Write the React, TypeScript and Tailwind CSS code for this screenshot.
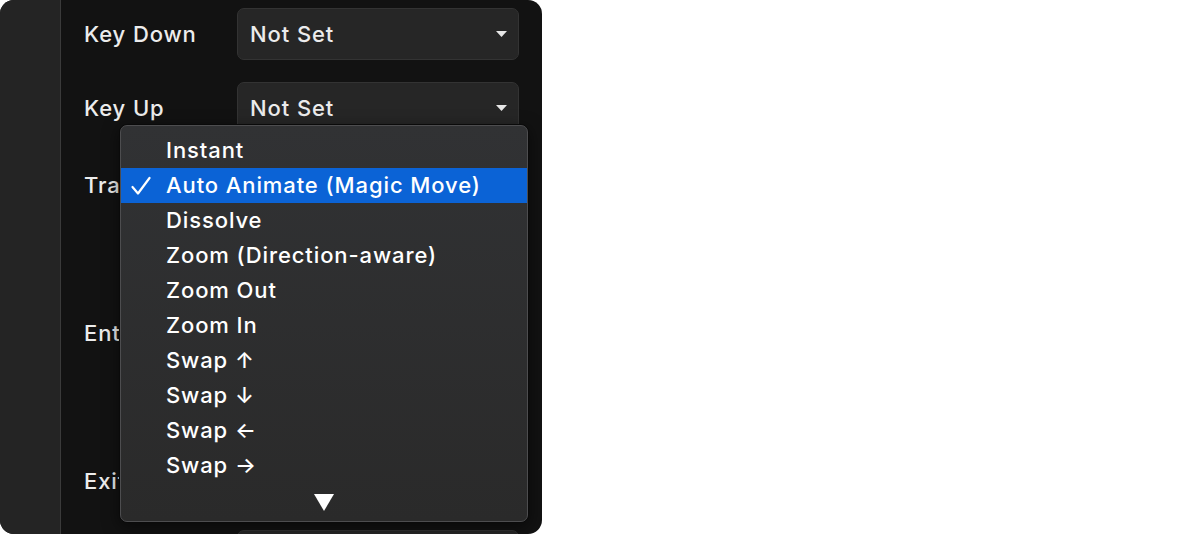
import React from 'react';

const items = [
  'Instant',
  'Auto Animate (Magic Move)',
  'Dissolve',
  'Zoom (Direction-aware)',
  'Zoom Out',
  'Zoom In',
  'Swap ↑',
  'Swap ↓',
  'Swap ←',
  'Swap →',
];

function Caret() {
  return (
    <svg width="11" height="6" viewBox="0 0 11 6" className="shrink-0">
      <path d="M0 0 H11 L5.5 6 Z" fill="#e6e6e6" />
    </svg>
  );
}

function Select({ value, className = '' }: { value: string; className?: string }) {
  return (
    <div
      className={
        'w-[282px] h-[52px] rounded-[7px] bg-[#262626] border border-[#333333] flex items-center justify-between pl-[12px] pr-[11px] ' +
        className
      }
    >
      <span className="text-[22px] font-medium tracking-[0.9px] text-[#ececec]">{value}</span>
      <Caret />
    </div>
  );
}

function Row({ label, children, className = '' }: { label: string; children?: React.ReactNode; className?: string }) {
  return (
    <div className={'flex items-start ' + className}>
      <div className="w-[153px] shrink-0 h-[52px] flex items-center text-[22px] font-medium tracking-[0.9px] text-[#ececec]">
        {label}
      </div>
      {children}
    </div>
  );
}

export default function App() {
  return (
    <div className="w-[1200px] h-[536px] bg-white" style={{ fontFamily: 'Inter, "Noto Sans", sans-serif' }}>
      <div className="w-[542px] h-[534px] rounded-[14px] overflow-hidden flex bg-[#121212]">
        <div className="w-[61px] shrink-0 bg-[#242424] border-r border-[#3a3a3a]" />
        <div className="relative flex-1 pl-[23px] pt-[8px] flex flex-col">
          <Row label="Key Down">
            <Select value="Not Set" />
          </Row>
          <Row label="Key Up" className="mt-[22px]">
            <Select value="Not Set" />
          </Row>
          <Row label="Transition" className="mt-[25px]">
            <Select value="Auto Animate (Magic Move)" />
          </Row>
          <Row label="Entrance" className="mt-[96px]">
            <Select value="Ease Out" />
          </Row>
          <Row label="Exit" className="mt-[96px]">
            <Select value="Ease In" />
          </Row>
          <Row label="" className="mt-[23px]">
            <Select value="" />
          </Row>

          {/* open dropdown menu */}
          <div className="absolute left-[58px] top-[124px] w-[410px] h-[399px] rounded-[8px] border border-[#0a0a0a] shadow-[0_4px_16px_rgba(0,0,0,0.5)]">
            <div className="w-full h-full rounded-[7px] border border-[#4d4d4f] bg-gradient-to-b from-[#313234] to-[#2a2a2a] pt-[7px] flex flex-col">
              {items.map((it, i) => {
                const on = i === 1;
                return (
                  <div
                    key={it}
                    className={
                      'h-[35px] flex items-center text-[22px] font-medium tracking-[0.9px] text-white ' +
                      (on ? 'bg-[#0b63d6]' : '')
                    }
                  >
                    <span className="w-[45px] shrink-0 pl-[10px] flex items-center">
                      {on && (
                        <svg width="20" height="20" viewBox="0 0 20 20">
                          <path d="M1.5 11 L7 17.5 L18.5 2" fill="none" stroke="#ffffff" strokeWidth="2.2" strokeLinecap="round" strokeLinejoin="round" />
                        </svg>
                      )}
                    </span>
                    <span>{it}</span>
                  </div>
                );
              })}
              <div className="flex justify-center mt-[11px]">
                <svg width="20" height="17" viewBox="0 0 20 17">
                  <path d="M0 0 H20 L10 17 Z" fill="#ffffff" />
                </svg>
              </div>
            </div>
          </div>
        </div>
      </div>
    </div>
  );
}
